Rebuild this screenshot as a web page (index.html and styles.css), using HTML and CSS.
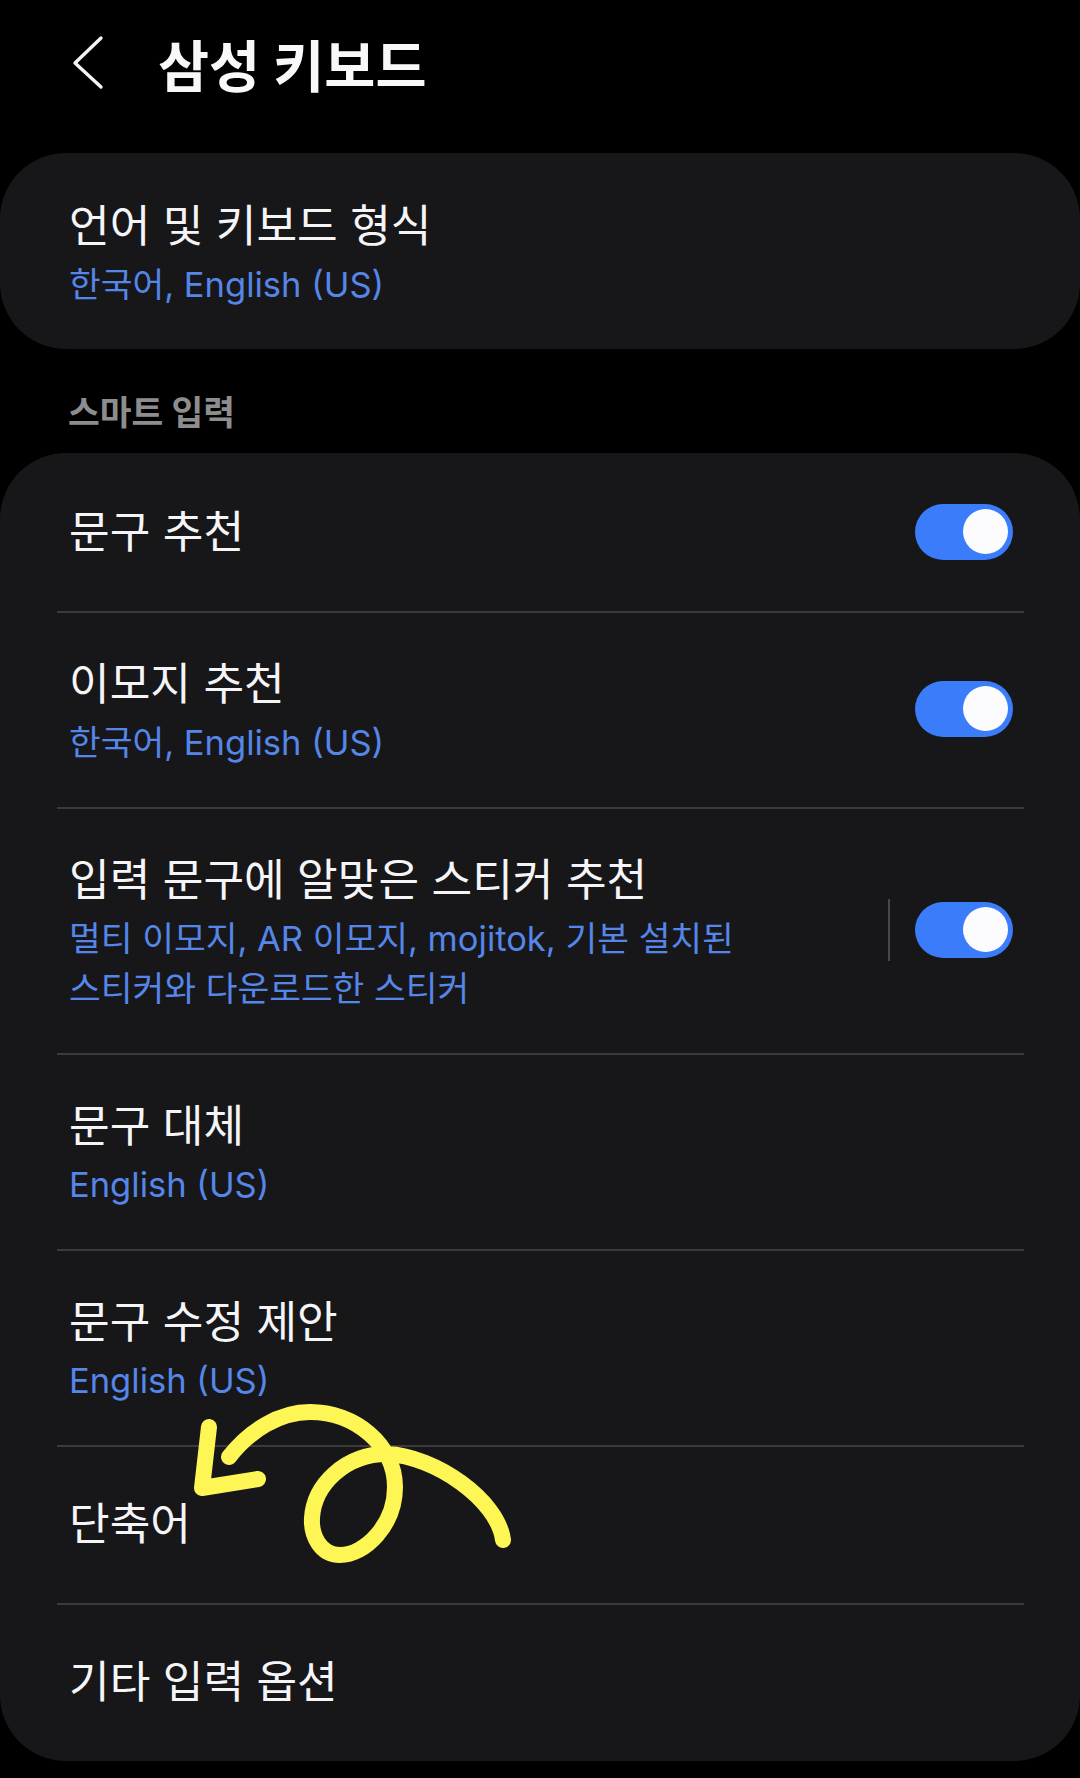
FILE: index.html
```html
<!DOCTYPE html>
<html lang="ko">
<head>
  <meta charset="UTF-8">
  <meta name="viewport" content="width=device-width, initial-scale=1.0">
  <title>삼성 키보드</title>
  <link rel="stylesheet" href="styles.css">
</head>
<body>
  <div class="container">
    <header class="top-bar">
      <svg class="back-icon" width="34" height="56" viewBox="0 0 34 56">
        <path d="M30 3 L4 28 L30 52" fill="none" stroke="#f4f4f6" stroke-width="3.4" stroke-linecap="round" stroke-linejoin="round"/>
      </svg>
      <h1>삼성 키보드</h1>
    </header>

    <section class="card">
      <div class="row">
        <div class="row-text">
          <p class="row-title">언어 및 키보드 형식</p>
          <p class="row-sub">한국어, English (US)</p>
        </div>
      </div>
    </section>

    <h2 class="section-label">스마트 입력</h2>

    <section class="card">
      <div class="row">
        <div class="row-text">
          <p class="row-title">문구 추천</p>
        </div>
        <div class="toggle"><span class="knob"></span></div>
      </div>
      <div class="row">
        <div class="row-text">
          <p class="row-title">이모지 추천</p>
          <p class="row-sub">한국어, English (US)</p>
        </div>
        <div class="toggle"><span class="knob"></span></div>
      </div>
      <div class="row">
        <div class="row-text">
          <p class="row-title">입력 문구에 알맞은 스티커 추천</p>
          <p class="row-sub">멀티 이모지, AR 이모지, mojitok, 기본 설치된<br>스티커와 다운로드한 스티커</p>
        </div>
        <span class="row-split"></span>
        <div class="toggle"><span class="knob"></span></div>
      </div>
      <div class="row">
        <div class="row-text">
          <p class="row-title">문구 대체</p>
          <p class="row-sub">English (US)</p>
        </div>
      </div>
      <div class="row">
        <div class="row-text">
          <p class="row-title">문구 수정 제안</p>
          <p class="row-sub">English (US)</p>
        </div>
      </div>
      <div class="row">
        <div class="row-text">
          <p class="row-title">단축어</p>
        </div>
      </div>
      <div class="row">
        <div class="row-text">
          <p class="row-title">기타 입력 옵션</p>
        </div>
      </div>
    </section>

    <!-- hand drawn arrow on top of the screenshot -->
    <svg class="scribble" width="1080" height="1778" viewBox="0 0 1080 1778">
      <g fill="none" stroke="#fdf655" stroke-width="16" stroke-linecap="round" stroke-linejoin="round">
        <path d="M209 1427 L202 1488 L258 1479"/>
        <path d="M229 1457 C250 1430 280 1412 310 1412 C355 1412 395 1445 395 1487 C395 1525 365 1555 340 1555 C320 1555 311 1535 312 1518 C314 1485 345 1454 387 1454 C435 1456 498 1500 503 1540"/>
      </g>
    </svg>
  </div>
</body>
</html>
```

FILE: styles.css
```css
body {
  margin: 0;
  background-color: #000;
  font-family: Inter, "Noto Sans CJK KR", sans-serif;
}
p, h1, h2 {
  margin: 0;
}
.container {
  position: relative;
  width: 1080px;
  height: 1778px;
  overflow: hidden;
}
.top-bar {
  height: 153px;
  box-sizing: border-box;
  padding: 0 0 28px 71px;
  display: flex;
  align-items: center;
  gap: 53px;
}
.top-bar h1 {
  font-size: 55.5px;
  font-weight: 700;
  color: #f8f8fa;
}
.card {
  background-color: #17171a;
  border-radius: 66px;
}
.section-label {
  height: 104px;
  box-sizing: border-box;
  padding: 40px 0 0 68px;
  font-size: 34.5px;
  line-height: 48px;
  font-weight: 700;
  color: #8d8d8f;
}
.row {
  position: relative;
  min-height: 158px;
  box-sizing: border-box;
  padding: 43px 67px 37px 69px;
  display: flex;
  align-items: center;
  border-bottom: 2px solid transparent;
}
.row + .row::before {
  content: "";
  position: absolute;
  top: 0;
  left: 57px;
  right: 56px;
  height: 2px;
  background-color: #3a3a3c;
}
.row-text {
  flex: 1;
}
.row-title {
  font-size: 44.2px;
  line-height: 60px;
  color: #f5f5f7;
}
.row-title:last-child {
  margin-bottom: 4px;
}
.row-sub {
  margin-top: 4px;
  font-size: 34.5px;
  line-height: 50px;
  color: #5586e8;
}
.row-split {
  width: 2px;
  height: 62px;
  margin: 0 25px 5px 0;
  background-color: #48484a;
}
.toggle {
  width: 98px;
  height: 56px;
  box-sizing: border-box;
  margin-bottom: 5px;
  padding: 5.5px 5px;
  border-radius: 28px;
  background-color: #3b7cfb;
  display: flex;
  justify-content: flex-end;
}
.knob {
  width: 45px;
  height: 45px;
  border-radius: 50%;
  background-color: #fcfcff;
}
.scribble {
  position: absolute;
  top: 0;
  left: 0;
  pointer-events: none;
}
```
